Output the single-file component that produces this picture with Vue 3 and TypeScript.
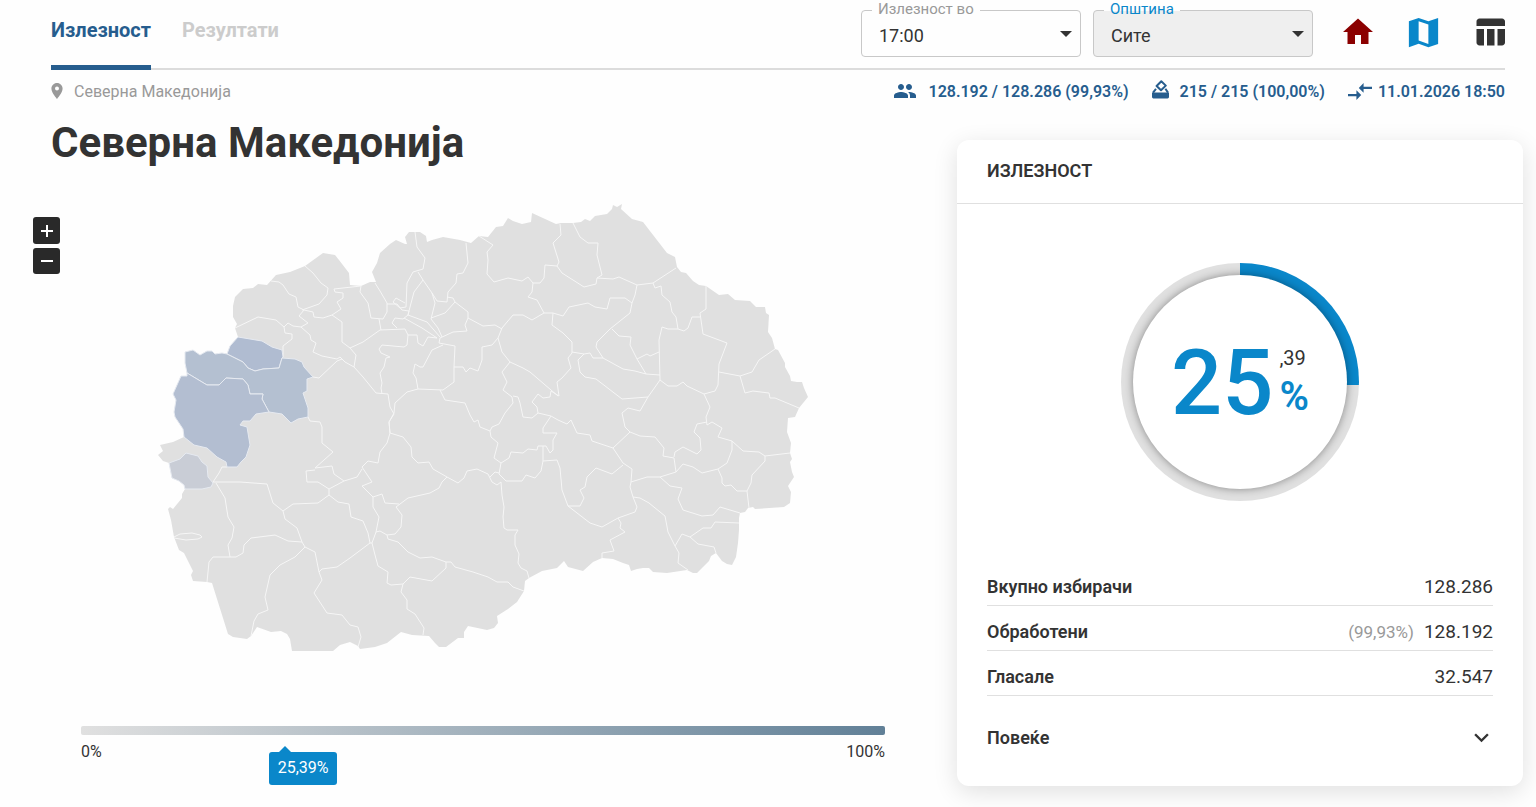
<script setup lang="ts">
import { ref } from 'vue'

interface Area {
  name: string
  fill: string
  d: string
}

const hour = ref('17:00')
const municipality = ref('Сите')
const turnout = 25.39

const rows = [
  { label: 'Вкупно избирачи', note: '', value: '128.286' },
  { label: 'Обработени', note: '(99,93%)', value: '128.192' },
  { label: 'Гласале', note: '', value: '32.547' },
]

const outline =
  'M185 352L193 350 200 355 207 351 212 351 215 354 222 353 227 354 230 346 238 337 235 328 237 324 233 317 233 306 235 297 243 289 253 288 258 284 267 285 276 275 290 272 305 266 323 253 335 255 339 260 349 273 350 285 361 286 370 282 376 282 372 272 377 263 380 253 390 244 396 240 405 244 407 244 405 237 409 232 420 232 426 236 427 242 432 240 443 237 460 240 471 243 479 236 488 237 496 227 503 226 508 218 513 221 522 224 531 222 532 213 556 224 561 223 573 223 581 222 585 219 590 221 595 216 607 214 612 209 613 205 617 207 622 204 621 209 632 219 643 222 667 253 675 257 677 267 681 272 686 273 693 281 699 285 706 286 719 295 728 294 735 300 750 301 756 307 765 307 766 313 769 315 768 332 772 338 775 349 778 350 785 363 785 367 790 376 791 381 797 382 802 382 804 388 808 397 799 408 795 417 788 418 787 432 791 443 790 453 792 459 790 462 792 472 794 477 788 486 791 492 790 503 784 507 755 509 753 507 748 508 745 512 740 513 739 518 739 530 738 543 736 557 732 565 727 564 722 561 716 553 711 556 709 561 703 567 697 573 693 573 687 570 667 573 653 572 649 568 643 568 637 569 631 571 629 565 623 563 613 559 602 558 593 562 583 571 568 567 564 561 557 568 542 571 529 578 525 581 524 591 517 602 508 609 497 616 498 623 494 628 487 630 468 626 464 632 464 638 458 638 446 647 439 647 435 643 429 636 412 635 401 632 387 643 375 647 360 649 358 646 350 642 340 645 333 651 292 651 290 639 287 634 281 631 271 632 257 627 251 636 247 639 233 637 228 634 212 583 207 582 193 581 191 575 193 571 184 553 179 550 174 537 171 520 168 509 170 507 173 509 182 498 182 494 185 489 184 485 179 481 172 478 169 463 163 461 158 455 163 451 160 445 173 442 184 437 183 429 175 417 174 412 176 400 173 394 181 376 187 376 187 373 185 363Z'

const areas: Area[] = [
  {
    name: 'north',
    fill: '#b0bcd1',
    d: 'M227 354L230 346 238 337 250 339 262 341 272 347 282 350 283 357 282 358 279 368 263 369 255 371 248 368 243 362Z',
  },
  {
    name: 'centre',
    fill: '#b4c0d1',
    d: 'M185 352L193 350 200 355 207 351 212 351 215 354 222 353 227 354 243 362 248 368 255 371 263 369 279 368 282 358 295 359 302 362 304 367 313 377 307 379 307 391 303 393 308 408 308 417 298 419 291 423 282 414 269 412 262 399 263 394 250 394 248 385 243 379 226 378 219 385 207 385 187 373 185 363Z',
  },
  {
    name: 'west',
    fill: '#b3bed1',
    d: 'M187 373L207 385 219 385 226 378 243 379 248 385 250 394 263 394 262 399 269 412 256 414 250 421 243 421 240 425 247 427 250 445 246 457 241 462 237 467 227 467 226 462 217 457 207 448 194 445 184 437 183 429 175 417 174 412 176 400 173 394 181 376 187 376Z',
  },
  {
    name: 'southwest',
    fill: '#c9cdd6',
    d: 'M169 463L180 459 186 453 198 456 202 462 207 466 208 477 213 483 211 487 202 489 185 489 184 485 179 481 172 478Z',
  },
]

const borders: string[] = [
  '271 281 279 282 283 285 289 294 296 297 298 307 304 310 299 316 308 323 301 327 293 326 288 323 284 327 276 320 258 317 235 328',
  '284 327 285 333 292 334 292 339 283 346 283 357',
  '305 266 313 273 321 283 328 288 327 295 319 304 302 310',
  '304 310 313 312 314 317 323 318 332 315 341 309 337 302 343 298 343 293 335 292 334 289 361 286',
  '301 327 310 335 311 340 316 343 313 352 322 356 337 359 340 357 345 362 354 367 363 377 376 393 388 394 390 407 394 414 389 422 390 433',
  '332 315 342 322 342 342 350 348 356 355 354 367',
  '350 348 363 342 380 330 405 329 408 335 407 345 404 347 382 345 379 349 381 353 390 357 386 358 384 367 380 373 382 383 381 388 382 394',
  '361 286 360 292 368 303 371 318 383 319 387 312 387 303 380 291 375 283',
  '379 319 381 330',
  '313 377 319 378 337 361 342 359',
  '308 417 310 421 320 422 322 427 322 443 333 452 315 468 332 466 334 474 344 481 329 489 318 482 307 482 306 471 315 470',
  '415 232 417 247 425 258 423 269 413 272 407 283 406 307 400 308 393 302 396 298 405 303',
  '418 272 423 280 432 293 437 301 447 302 448 292 456 283 457 274 463 273 468 263 466 243',
  '423 280 414 292 410 307 408 315 427 322 440 337',
  '432 293 435 303 431 319 438 328 442 337',
  '431 318 445 313 455 302 468 312 468 318 465 325 467 331 453 332 440 338 439 343 455 346 454 367 454 382 443 390 418 389 416 378 413 373 415 364 420 367 423 367 432 350 443 345',
  '447 297 453 298 455 302',
  '387 304 397 304 402 310 409 311 408 315 403 319 395 318 392 323 397 328',
  '404 318 422 328 437 338 428 337 423 346 418 343 417 335 408 335',
  '479 236 493 245 487 252 488 260 487 274 494 282 508 278 522 281 528 277 533 283 532 292 528 297 537 300 544 313 532 320 523 315 513 315 502 328 498 338 502 352 510 362 523 368 530 372 558 396',
  '533 283 540 283 544 278 545 265 557 266 559 262 553 243 561 235 560 224',
  '557 266 562 273 584 287 596 284 597 278 602 275 597 255 598 243 588 243 580 237 573 223',
  '468 318 483 326 495 325 502 329',
  '498 338 492 345 482 347 482 360 478 371 470 368 466 372 463 367 454 367',
  '510 362 502 372 507 382 503 390 512 397 513 403 505 413 499 424 492 427 490 431 480 427 478 420 474 422 470 415 465 403 445 400 440 390',
  '418 389 407 392 395 403 394 413 389 422 390 433 387 443 380 452 378 463 368 461 362 467 372 482 362 486 373 497 382 494 385 503 399 504',
  '390 433 403 437 411 447 412 457 418 463 429 462 433 469 447 477 458 483 464 478 467 471 477 469 488 474 492 482 497 485 501 482',
  '447 477 442 482 439 488 430 493 408 498 396 507 402 515 401 527 395 534 387 535 380 531 376 532 379 517 373 507 373 497',
  '387 535 388 539 398 542 408 552 420 558 432 557 446 562 446 568 432 581 410 577 403 584 391 585 387 583 388 572 378 566 375 555 372 543 376 532',
  '446 562 451 562 455 567 473 572 488 577 497 582 508 582 513 587 524 591',
  '403 584 401 592 407 600 407 609 415 614 424 628 423 635',
  '501 482 502 495 504 507 503 517 504 528 507 530 518 530 515 535 515 545 519 554 518 563 521 568 527 571 529 578',
  '490 431 491 437 498 443 494 458 501 463 499 474 506 481 522 481 526 475 535 478 541 471 543 461 543 446 538 446 537 450 528 449 523 453 511 452 509 458 501 463',
  '490 477 495 472 499 473',
  '543 446 546 446 550 453 553 450 553 440 557 433 543 433 543 428 551 416 538 413 532 418 523 417 520 403 518 397 513 396',
  '538 413 537 407 532 402 538 394 543 398 550 397 551 391 559 396 557 382 562 378 571 368 568 358 572 353 572 342 563 333 552 325 553 313 544 313',
  '553 313 563 316 569 307 588 303 595 307 607 309 610 298 625 298 632 303 630 313 610 329 597 342 596 347 603 358 593 358 590 353 584 354 572 352',
  '597 278 613 279 619 277 637 285 653 283 676 268',
  '637 285 635 295 632 303',
  '653 283 655 288 661 286 662 295 670 302 672 312 676 317 678 329 668 329 662 327 659 340 660 380 668 386 677 386 683 382 687 386 704 394 715 391 718 385 719 364 727 343 703 334 700 313 706 309 706 286',
  '678 329 684 331 688 328 692 317 700 317',
  '612 329 619 336 631 337 630 345 637 359 646 374 660 375',
  '637 359 647 354 650 356 659 352',
  '603 358 623 369 635 371 646 374',
  '584 354 578 360 580 372 585 377 596 379 622 399 648 397 660 380',
  '648 397 640 411 628 408 622 413 625 427 630 432 613 448 592 441 590 435 577 433 571 420 567 424 558 420 551 416',
  '719 372 740 376 752 372 759 360 775 349',
  '740 376 745 393 753 391 769 393 770 398 775 398 799 408',
  '704 394 710 407 706 417 707 425 712 422 722 428 718 437 732 441 743 451 759 452 765 456 790 453',
  '630 432 640 436 655 437 664 448 663 456 674 458 676 472 683 464 693 467 702 473 718 469 727 463 732 450 732 441',
  '674 457 675 452 683 447 697 454 701 450 700 438 694 432 697 424 707 422',
  '613 448 623 463 632 469 631 482 647 477 660 477 676 472',
  '623 465 612 474 596 468 587 477 585 487 580 490 584 498 580 506 568 506 562 490 560 468 557 460 543 461',
  '568 506 590 523 602 527 618 518 635 512 637 507 633 497 630 487 631 482',
  '618 518 621 523 620 528 625 532 610 540 614 551 602 553 602 558',
  '633 497 640 498 649 503 665 516 668 532 675 546 679 553 678 563 688 570',
  '660 477 670 486 682 488 678 499 683 510 702 516 713 515 720 507 740 513',
  '675 546 682 534 690 537 698 544 714 547 716 553',
  '690 537 703 528 711 528 715 522 739 523',
  '718 469 722 478 722 483 725 486 731 485 737 491 747 491 751 483 752 475 765 461 765 456',
  '747 491 749 508',
  '213 482 240 482 267 484 273 503 283 511 285 519 297 528 302 542 305 547 315 552 319 572 322 580 314 593 327 613 342 615 350 625 358 627 361 637 358 647',
  '213 482 219 473 222 467 227 467',
  '216 483 225 498 228 517 234 527 232 538 228 545 230 557',
  '207 582 209 562 213 557 236 557 243 553 244 545 251 538 275 535 288 541 302 542',
  '305 547 295 557 280 565 270 575 265 597 268 610 258 614 254 621 251 636',
  '283 511 293 504 318 503 329 495 338 502 349 504 351 517 363 521 368 533 370 543 350 558 337 567 322 569 319 572',
  '329 489 329 495',
  '344 481 357 477 362 469',
  '370 543 372 543',
  '174 537 180 534 192 533 200 535 202 537 198 539 186 540 174 538',
]
</script>

<template>
  <div class="page">
    <header class="topbar">
      <nav class="tabs">
        <a href="#turnout" class="tab active">Излезност</a>
        <a href="#results" class="tab">Резултати</a>
      </nav>
      <div class="tools">
        <div class="field">
          <label for="hour">Излезност во</label>
          <select id="hour" v-model="hour">
            <option>17:00</option>
          </select>
          <svg class="caret" viewBox="0 0 12 6" aria-hidden="true"><path d="M0 0h12L6 6z" /></svg>
        </div>
        <div class="field shaded">
          <label for="municipality">Општина</label>
          <select id="municipality" v-model="municipality">
            <option>Сите</option>
          </select>
          <svg class="caret" viewBox="0 0 12 6" aria-hidden="true"><path d="M0 0h12L6 6z" /></svg>
        </div>
        <div class="views">
          <a href="#home" class="home" aria-label="Почетна">
            <svg viewBox="0 0 24 24"><path d="M10 20v-6h4v6h5v-8h3L12 3 2 12h3v8z" /></svg>
          </a>
          <a href="#map" class="map-view" aria-label="Мапа">
            <svg viewBox="0 0 24 24"><path d="M21 3l-6 2.1L9 3 3 5v16l6-2.1 6 2.1 6-2V3zM15 19l-6-2.11V5l6 2.11V19z" /></svg>
          </a>
          <a href="#table" class="table-view" aria-label="Табела">
            <svg viewBox="0 0 24 24"><path d="M10 10.02h5V21h-5zM17 21h3c1.1 0 2-.9 2-2v-9h-5v11zm3-18H5c-1.1 0-2 .9-2 2v3h19V5c0-1.1-.9-2-2-2zM3 19c0 1.1.9 2 2 2h3V10H3v9z" /></svg>
          </a>
        </div>
      </div>
    </header>

    <div class="infobar">
      <div class="crumb">
        <svg viewBox="5 2 14 20" aria-hidden="true"><path d="M12 2C8.13 2 5 5.13 5 9c0 5.25 7 13 7 13s7-7.75 7-13c0-3.87-3.13-7-7-7zm0 9.5a2.5 2.5 0 0 1 0-5 2.5 2.5 0 0 1 0 5z" /></svg>
        <span>Северна Македонија</span>
      </div>
      <div class="stats">
        <div class="stat people">
          <svg viewBox="0 0 24 24" aria-hidden="true"><path d="M16 11c1.66 0 2.99-1.34 2.99-3S17.66 5 16 5c-1.66 0-3 1.34-3 3s1.34 3 3 3zm-8 0c1.66 0 2.99-1.34 2.99-3S9.66 5 8 5C6.34 5 5 6.34 5 8s1.34 3 3 3zm0 2c-2.33 0-7 1.17-7 3.5V19h14v-2.5c0-2.33-4.67-3.5-7-3.5zm8 0c-.29 0-.62.02-.97.05 1.16.84 1.97 1.97 1.97 3.45V19h6v-2.5c0-2.33-4.67-3.5-7-3.5z" /></svg>
          <span>128.192 / 128.286 (99,93%)</span>
        </div>
        <div class="stat ballot">
          <svg viewBox="0 0 17 22" aria-hidden="true">
            <path d="M0 12.5h17V17a1.4 1.4 0 0 1-1.4 1.4H1.4A1.4 1.4 0 0 1 0 17z" />
            <path class="line" d="M4 8.8L1 12.6M13.4 8.8L16 12.6M9.3 1.2L13.8 5.6 9 10.2 4.6 6z" />
          </svg>
          <span>215 / 215 (100,00%)</span>
        </div>
        <div class="stat sync">
          <svg viewBox="2 5 20 14" aria-hidden="true"><path d="M9.01 14H2v2h7.01v3L13 15l-3.99-4v3zm5.98-1v-3H22V8h-7.01V5L11 9l3.99 4z" /></svg>
          <time datetime="2026-01-11T18:50">11.01.2026 18:50</time>
        </div>
      </div>
    </div>

    <main class="content">
      <section class="left">
        <h1>Северна Македонија</h1>
        <div class="map">
          <div class="zoom">
            <button type="button" aria-label="Зголеми"><svg viewBox="0 0 12 12"><path d="M6 0v12M0 6h12" /></svg></button>
            <button type="button" aria-label="Намали"><svg viewBox="0 0 12 12"><path d="M0 6h12" /></svg></button>
          </div>
          <svg class="country" viewBox="157 203 652 449" role="img" aria-label="Северна Македонија">
            <path class="land" :d="outline" />
            <polyline v-for="(b, i) in borders" :key="i" class="border" :points="b" />
            <path v-for="a in areas" :key="a.name" class="area" :fill="a.fill" :d="a.d" />
          </svg>
        </div>
        <div class="legend">
          <div class="bar"></div>
          <div class="ends"><span>0%</span><span>100%</span></div>
          <div class="marker" :style="{ left: turnout + '%' }">25,39%</div>
        </div>
      </section>

      <aside class="card">
        <h2>ИЗЛЕЗНОСТ</h2>
        <div class="chart">
          <div class="ring" :style="{ '--share': turnout + '%' }">
            <div class="hole">
              <span class="whole">25</span>
              <span class="part"><span class="decimals">,39</span><span class="sign">%</span></span>
            </div>
          </div>
        </div>
        <dl>
          <div v-for="r in rows" :key="r.label" class="row">
            <dt>{{ r.label }}</dt>
            <dd><small v-if="r.note">{{ r.note }}</small>{{ r.value }}</dd>
          </div>
        </dl>
        <button type="button" class="more">
          <span>Повеќе</span>
          <svg viewBox="0 0 24 24" aria-hidden="true"><path d="M7.41 8.59L12 13.17l4.59-4.58L18 10l-6 6-6-6z" /></svg>
        </button>
      </aside>
    </main>
  </div>
</template>

<style>
body {
  background: #fefefe;
}
</style>

<style scoped>
* {
  box-sizing: border-box;
}
.page {
  min-height: 100vh;
  font-family: Roboto, "Liberation Sans", sans-serif;
  color: #333;
}
.topbar {
  display: flex;
  justify-content: space-between;
  height: 70px;
  margin: 0 31px 0 51px;
  border-bottom: 2px solid #dcdcdc;
}
.tabs {
  display: flex;
  gap: 31px;
}
.tab {
  height: 70px;
  padding-top: 18px;
  font-size: 20px;
  line-height: 24px;
  font-weight: 700;
  color: #ccc;
  text-decoration: none;
}
.tab.active {
  color: #265d8e;
  border-bottom: 5px solid #265d8e;
}
.tools {
  display: flex;
  gap: 12px;
  padding-top: 10px;
}
.field {
  position: relative;
  width: 220px;
  height: 47px;
}
.field label {
  position: absolute;
  left: 11px;
  top: -9px;
  padding: 0 6px;
  font-size: 15px;
  line-height: 16px;
  color: #999;
  background: #fefefe;
}
.field select {
  appearance: none;
  width: 100%;
  height: 100%;
  padding: 4px 30px 0 17px;
  border: 1px solid #c8c8c8;
  border-radius: 4px;
  background: #fefefe;
  color: #333;
  font-family: inherit;
  font-size: 18px;
}
.field.shaded select {
  background: #efefef;
}
.field.shaded label {
  color: #0a87ca;
  background: linear-gradient(#fefefe 60%, #efefef 60%);
}
.caret {
  position: absolute;
  right: 9px;
  top: 21px;
  width: 12px;
  height: 6px;
  fill: #333;
  pointer-events: none;
}
.views {
  display: flex;
  gap: 29px;
  padding: 3px 0 0 14px;
  margin-right: -3px;
}
.views a {
  width: 37px;
  height: 38px;
  display: flex;
  align-items: center;
  justify-content: center;
}
.views svg {
  flex: none;
  width: 36px;
  height: 36px;
}
.home {
  fill: #8b0000;
}
.views .map-view svg {
  width: 39px;
  height: 39px;
}
.map-view {
  fill: #0a87ca;
}
.table-view {
  fill: #333;
}
.infobar {
  display: flex;
  justify-content: space-between;
  align-items: center;
  height: 42px;
  margin: 0 31px 0 51px;
}
.crumb {
  display: flex;
  align-items: center;
  gap: 11px;
  font-size: 16px;
  color: #999;
}
.crumb svg {
  width: 12px;
  height: 16px;
  fill: #999;
}
.stats {
  display: flex;
  gap: 23px;
  font-size: 16px;
  font-weight: 600;
  color: #265d8e;
}
.stat {
  display: flex;
  align-items: center;
  gap: 11px;
}
.stat svg {
  width: 24px;
  height: 24px;
  fill: currentColor;
}
.stat.ballot svg {
  width: 17px;
  height: 22px;
}
.line {
  fill: none;
  stroke: currentColor;
  stroke-width: 2;
  stroke-linejoin: round;
}
.stat.sync {
  gap: 6px;
}
.stat.sync svg {
  height: 17px;
}
.content {
  display: flex;
  align-items: flex-start;
  padding: 0 13px 20px 51px;
}
.left {
  flex: 1;
  min-width: 0;
}
h1 {
  margin: 0;
  padding-top: 6px;
  font-size: 42px;
  line-height: 50px;
  font-weight: 700;
}
.map {
  position: relative;
  margin-top: 35px;
  padding: 0 148px 0 106px;
}
.country {
  display: block;
  width: 100%;
}
.land {
  fill: #e0e0e0;
}
.border {
  fill: none;
  stroke: #f6f6f6;
  stroke-width: 1;
  stroke-linejoin: round;
}
.area {
  stroke: #e6eaf1;
  stroke-width: 1;
  stroke-linejoin: round;
}
.zoom {
  position: absolute;
  left: -18px;
  top: 14px;
  display: grid;
  gap: 4px;
}
.zoom button {
  display: grid;
  place-items: center;
  width: 27px;
  height: 27px;
  padding: 0;
  border: 0;
  border-radius: 3px;
  background: #292929;
}
.zoom button + button {
  height: 26px;
}
.zoom svg {
  width: 12px;
  height: 12px;
  stroke: #fff;
  stroke-width: 2;
}
.legend {
  position: relative;
  margin: 74px 72px 0 30px;
}
.bar {
  height: 9px;
  border-radius: 2px;
  background: linear-gradient(90deg, #e0e0e0, #618097);
}
.ends {
  display: flex;
  justify-content: space-between;
  padding-top: 8px;
  font-size: 16px;
  line-height: 18px;
}
.marker {
  position: absolute;
  top: 26px;
  margin-left: -16px;
  width: 68px;
  height: 33px;
  border-radius: 3px;
  background: #0a87ca;
  color: #fff;
  font-size: 16px;
  line-height: 32px;
  text-align: center;
}
.marker::before {
  content: "";
  position: absolute;
  left: 10px;
  top: -6px;
  border: 6px solid transparent;
  border-top: 0;
  border-bottom-color: #0a87ca;
}
.card {
  width: 566px;
  margin-top: 28px;
  border-radius: 12px;
  background: #fff;
  box-shadow: 0 6px 24px rgba(0, 0, 0, 0.12);
}
h2 {
  margin: 0;
  padding: 0 30px 2px;
  font-size: 18px;
  line-height: 61px;
  font-weight: 600;
  border-bottom: 1px solid #e0e0e0;
}
.chart {
  display: flex;
  justify-content: center;
  padding: 59px 0 60px;
}
.ring {
  width: 238px;
  height: 238px;
  padding: 12px;
  border-radius: 50%;
  background: conic-gradient(#0a87ca var(--share), #e0e0e0 0);
}
.hole {
  display: flex;
  align-items: center;
  justify-content: center;
  gap: 6px;
  height: 100%;
  padding-top: 4px;
  border-radius: 50%;
  background: #fff;
  box-shadow: 0 0 8px rgba(0, 0, 0, 0.4);
}
.whole {
  font-size: 90px;
  line-height: 90px;
  font-weight: 500;
  color: #0a87ca;
}
.part {
  display: grid;
}
.decimals {
  font-size: 20px;
  line-height: 26px;
}
.sign {
  font-size: 40px;
  line-height: 52px;
  font-weight: 600;
  color: #0a87ca;
}
dl {
  margin: 0;
  padding: 0 30px;
}
.row {
  display: flex;
  justify-content: space-between;
  height: 45px;
  padding-top: 8px;
  border-bottom: 1px solid #e0e0e0;
  line-height: 36px;
}
dt {
  font-size: 18px;
  font-weight: 600;
}
dd {
  margin: 0;
  font-size: 19px;
}
small {
  margin-right: 10px;
  font-size: 17px;
  color: #999;
}
.more {
  display: flex;
  justify-content: space-between;
  align-items: center;
  width: 100%;
  height: 90px;
  padding: 0 27px 8px 30px;
  border: 0;
  background: none;
  color: #333;
  font-family: inherit;
  font-size: 18px;
  font-weight: 600;
}
.more svg {
  width: 29px;
  height: 29px;
  fill: #333;
}
</style>
